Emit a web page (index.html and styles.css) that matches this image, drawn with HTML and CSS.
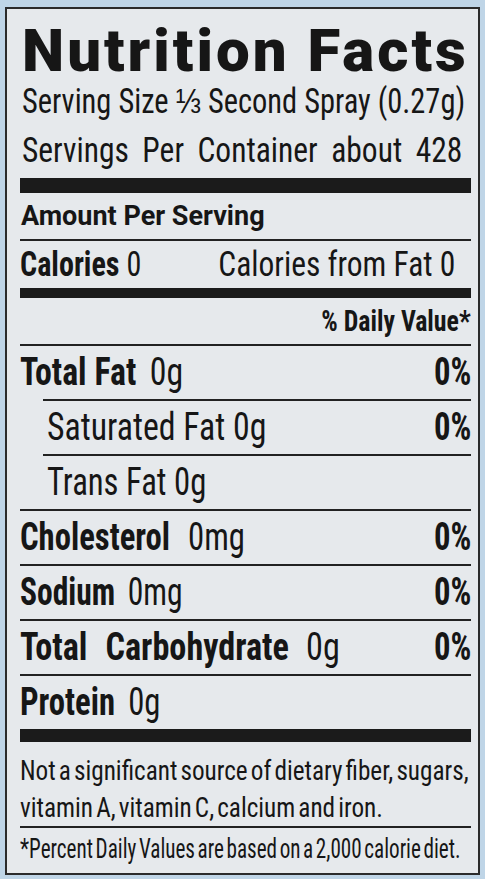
FILE: index.html
```html
<!DOCTYPE html>
<html>
<head>
<meta charset="utf-8">
<title>Nutrition Facts</title>
<link rel="stylesheet" href="styles.css">
</head>
<body>
<div class="label">
  <h1 class="title">Nutrition Facts</h1>
  <div class="serving"><span class="sq s1">Serving Size ⅓ Second Spray (0.27g)</span></div>
  <div class="serving"><span class="sq s2">Servings Per Container about 428</span></div>
  <div class="bar bar-top"></div>
  <div class="amount">Amount Per Serving</div>
  <div class="calories">
    <span class="sq lft"><b>Calories</b> 0</span>
    <span class="sq rgt cal-fat">Calories from Fat 0</span>
  </div>
  <div class="bar bar-mid"></div>
  <div class="dv"><span class="sq rgt">% Daily Value*</span></div>
  <div class="row">
    <span class="sq lft wide"><b>Total Fat</b><span class="amt">0g</span></span>
    <span class="sq rgt pct">0%</span>
  </div>
  <div class="row sub">
    <span class="sq lft wide">Saturated Fat 0g</span>
    <span class="sq rgt pct">0%</span>
  </div>
  <div class="row sub">
    <span class="sq lft">Trans Fat 0g</span>
  </div>
  <div class="row">
    <span class="sq lft"><b>Cholesterol</b><span class="amt amt-l">0mg</span></span>
    <span class="sq rgt pct">0%</span>
  </div>
  <div class="row">
    <span class="sq lft narrow"><b>Sodium</b><span class="amt">0mg</span></span>
    <span class="sq rgt pct">0%</span>
  </div>
  <div class="row">
    <span class="sq lft carb"><b class="spaced">Total Carbohydrate</b><span class="amt amt-xl">0g</span></span>
    <span class="sq rgt pct">0%</span>
  </div>
  <div class="row">
    <span class="sq lft"><b>Protein</b><span class="amt">0g</span></span>
  </div>
  <div class="bar bar-bottom"></div>
  <div class="note">
    <div class="note-line"><span class="sq nq">Not a significant source of dietary fiber, sugars,</span></div>
    <div class="note-line"><span class="sq nq">vitamin A, vitamin C, calcium and iron.</span></div>
  </div>
  <div class="fine"><span class="sq fq">*Percent Daily Values are based on a 2,000 calorie diet.</span></div>
</div>
</body>
</html>
```
FILE: styles.css
```css
html, body {
  margin: 0;
  padding: 0;
}
body {
  background: #bfd5e7;
  font-family: "Roboto Condensed", Roboto, sans-serif;
  color: #161616;
  overflow: hidden;
}
.label {
  box-sizing: border-box;
  width: 475px;
  margin: 7px 0 0 5px;
  border: 2px solid #2b2b2b;
  background: #e6e9ec;
  padding: 10px 7px 6px 13px;
  overflow: hidden;
}
.title {
  margin: 0;
  font-family: Roboto, sans-serif;
  font-weight: 900;
  font-size: 60px;
  line-height: 52px;
  padding-top: 6px;
  letter-spacing: 3px;
  padding-left: 2px;
  white-space: nowrap;
}
.sq {
  display: inline-block;
  white-space: nowrap;
  transform: scaleX(0.86);
  transform-origin: left center;
}
.sq.rgt {
  transform-origin: right center;
}
.serving {
  font-size: 35px;
  line-height: 49px;
  white-space: nowrap;
  padding-left: 2px;
}
.s1 {
  transform: scaleX(0.87);
}
.s2 {
  transform: scaleX(0.9);
  word-spacing: 7px;
}
.bar {
  background: #1b1b1b;
}
.bar-top {
  height: 15px;
  margin-top: 3px;
}
.bar-mid {
  height: 10px;
}
.bar-bottom {
  height: 13px;
}
.amount {
  font-family: Roboto, sans-serif;
  font-weight: 700;
  font-size: 27px;
  line-height: 46px;
  padding-left: 1px;
  white-space: nowrap;
}
.calories {
  display: flex;
  justify-content: space-between;
  border-top: 2px solid #222;
  font-size: 35px;
  line-height: 47px;
  padding-right: 16px;
}
.cal-fat {
  transform: scaleX(0.9);
}
.lft {
  flex: 1 1 auto;
  min-width: 0;
}
.rgt {
  flex: 0 0 auto;
}
.dv {
  font-weight: 700;
  font-size: 30px;
  line-height: 46px;
  text-align: right;
}
.row {
  display: flex;
  justify-content: space-between;
  border-top: 2px solid #222;
  font-size: 38px;
  line-height: 53px;
}
.row.sub {
  margin-left: 23px;
  padding-left: 4px;
}
.wide {
  transform: scaleX(0.89);
}
.narrow {
  transform: scaleX(0.83);
}
.carb {
  transform: scaleX(0.9);
}
.amt {
  margin-left: 0.4em;
}
.amt-l {
  margin-left: 0.55em;
}
.amt-xl {
  margin-left: 0.5em;
}
.spaced {
  word-spacing: 0.3em;
}
.pct {
  font-weight: 700;
}
.note {
  font-size: 28px;
  line-height: 37px;
  padding-top: 10px;
}
.nq {
  transform: scaleX(0.9);
  word-spacing: -3px;
}
.fine {
  border-top: 2px solid #222;
  font-size: 28px;
  line-height: 37px;
  padding-top: 2px;
}
.fq {
  transform: scaleX(0.755);
  word-spacing: -3px;
}
```
